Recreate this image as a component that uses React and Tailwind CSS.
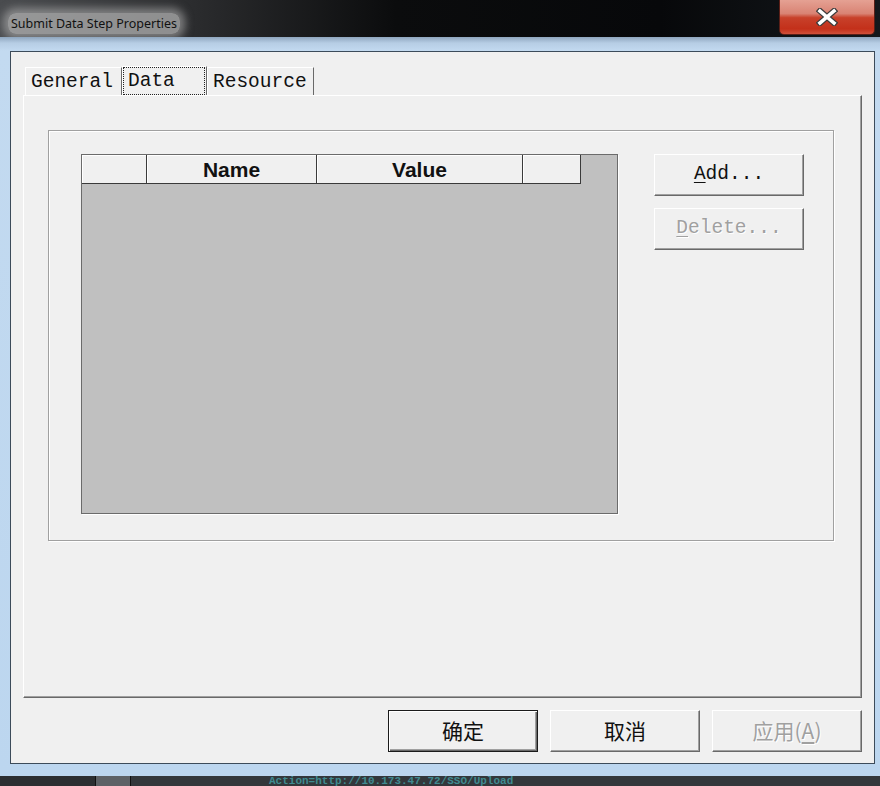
import React from "react";

const mono = { fontFamily: '"Liberation Mono", "DejaVu Sans Mono", monospace' };
const cjk = { fontFamily: '"Noto Sans CJK SC", "Liberation Sans", sans-serif' };

const Btn3D = ({ children, disabled, isDefault, className = "" }) => (
  <div
    className={
      "w-[150px] h-[42px] flex items-center justify-center bg-[#f0f0f0] " +
      (isDefault
        ? "border border-[#1a1a1a] shadow-[inset_1px_1px_0_#ffffff,inset_-1px_-1px_0_#696969,inset_-2px_-2px_0_#a0a0a0] "
        : "border-t border-l border-white border-r border-b border-r-[#696969] border-b-[#696969] shadow-[inset_-1px_-1px_0_#a0a0a0] ") +
      (disabled ? "text-[#a0a0a0] [text-shadow:1px_1px_0_#ffffff] " : "text-[#111] ") +
      className
    }
  >
    {children}
  </div>
);

const Tab = ({ label, selected, width }) => (
  <div
    className={
      "flex items-center border-t border-l border-white border-r border-r-[#696969] " +
      (selected ? "h-[29px] bg-[#f0f0f0]" : "h-[28px]")
    }
    style={{ width }}
  >
    {selected ? (
      <span className="h-[28px] w-[82px] flex items-center pl-[4px] pt-[2px] border border-dotted border-[#222] text-[19.5px] text-[#111]" style={mono}>
        {label}
      </span>
    ) : (
      <span className="pl-[5px] pt-[3px] text-[19.5px] text-[#111]" style={mono}>
        {label}
      </span>
    )}
  </div>
);

export default function App() {
  const cols = [
    { w: 65, t: "" },
    { w: 170, t: "Name" },
    { w: 206, t: "Value" },
    { w: 58, t: "" },
  ];

  return (
    <div className="w-[880px] h-[786px] overflow-hidden flex flex-col bg-[#1b1e22]">
      {/* title bar */}
      <div className="h-[37px] shrink-0 flex items-start bg-[linear-gradient(90deg,#4a4c4f_0%,#2b2c2e_22%,#0b0c0d_45%,#07080a_75%,#14181c_100%)]">
        <div className="pl-[11px] pt-[10px]">
          <span
            className="text-[12.5px] leading-[16px] text-[#111] rounded-[8px] px-[3px] -mx-[3px] py-[2px] bg-[#b8b8b8]/70 shadow-[0_0_8px_5px_rgba(190,190,190,0.55)]"
            style={{ fontFamily: '"Noto Sans", "Open Sans", sans-serif' }}
          >
            Submit Data Step Properties
          </span>
        </div>
        <div className="ml-auto mr-[5px] w-[96px] h-[35px] rounded-b-[5px] border border-t-0 border-[#5a1f17] bg-[linear-gradient(180deg,#e5a193_0%,#d98374_40%,#c8412b_52%,#c3301a_85%,#d0503a_100%)] flex items-center justify-center">
          <svg width="22" height="18" viewBox="0 0 22 18">
            <path d="M4 3 L18 15 M18 3 L4 15" stroke="#3b3b3b" strokeWidth="6" strokeLinecap="square" />
            <path d="M4 3 L18 15 M18 3 L4 15" stroke="#ffffff" strokeWidth="3.6" strokeLinecap="square" />
          </svg>
        </div>
      </div>

      {/* window frame */}
      <div className="h-[739px] shrink-0 flex pl-[10px] pr-[5px] pt-[14px] pb-[12px] bg-[linear-gradient(180deg,#8fa6be_0px,#b6cde4_6px,#c3daf0_14px,#bcd6ef_100%)]">
        <div className="flex-1 border border-[#3c4b5a] bg-[#f0f0f0] flex flex-col">
          {/* tabs */}
          <div className="h-[43px] flex items-end pl-[14px] pt-[14px]">
            <Tab label="General" width={97} />
            <Tab label="Data" selected width={85} />
            <Tab label="Resource" width={107} />
          </div>

          {/* tab panel */}
          <div className="ml-[12px] w-[839px] h-[603px] border-t border-l border-white border-r border-b border-r-[#696969] border-b-[#696969] shadow-[inset_-1px_-1px_0_#a0a0a0] pl-[24px] pt-[34px]">
            {/* group frame */}
            <div className="w-[786px] h-[411px] border border-[#a0a0a0] shadow-[1px_1px_0_#ffffff,inset_1px_1px_0_#ffffff] pl-[32px] pt-[23px] flex items-start">
              {/* grid */}
              <div className="w-[537px] h-[360px] bg-[#c0c0c0] border border-[#6b6b6b] shadow-[1px_1px_0_#ffffff]">
                <div className="flex h-[29px]">
                  {cols.map((c, i) => (
                    <div
                      key={i}
                      className="h-[29px] flex items-center justify-center pt-[2px] bg-[#f0f0f0] border-r border-b border-[#3a3a3a] shadow-[inset_1px_1px_0_#ffffff] text-[21px] font-bold text-[#111]"
                      style={{ width: c.w, fontFamily: '"Liberation Sans", Arial, sans-serif' }}
                    >
                      {c.t}
                    </div>
                  ))}
                </div>
              </div>

              {/* side buttons */}
              <div className="ml-[36px] flex flex-col gap-[12px]">
                <Btn3D className="text-[19.5px]">
                  <span style={mono}>
                    <span className="underline underline-offset-[3px]">A</span>dd...
                  </span>
                </Btn3D>
                <Btn3D disabled className="text-[19.5px]">
                  <span style={mono}>
                    <span className="underline underline-offset-[3px]">D</span>elete...
                  </span>
                </Btn3D>
              </div>
            </div>
          </div>

          {/* dialog buttons */}
          <div className="mt-[12px] flex justify-end gap-[12px] pr-[12px]">
            <Btn3D isDefault className="text-[21px]">
              <span style={cjk}>确定</span>
            </Btn3D>
            <Btn3D className="text-[21px]">
              <span style={cjk}>取消</span>
            </Btn3D>
            <Btn3D disabled className="text-[21px]">
              <span style={cjk}>
                应用(<span className="underline underline-offset-[3px]">A</span>)
              </span>
            </Btn3D>
          </div>
        </div>
      </div>

      {/* background window peeking below */}
      <div className="h-[10px] shrink-0 flex bg-[#33373b] overflow-hidden">
        <div className="w-[95px] bg-[#2b2e31]" />
        <div className="w-[36px] bg-[#5d6166] border-l border-r border-[#111]" />
        <div className="pl-[138px] text-[11px] leading-[10px] font-bold text-[#3f8a90] whitespace-nowrap" style={mono}>
          Action=http://10.173.47.72/SSO/Upload
        </div>
      </div>
    </div>
  );
}
